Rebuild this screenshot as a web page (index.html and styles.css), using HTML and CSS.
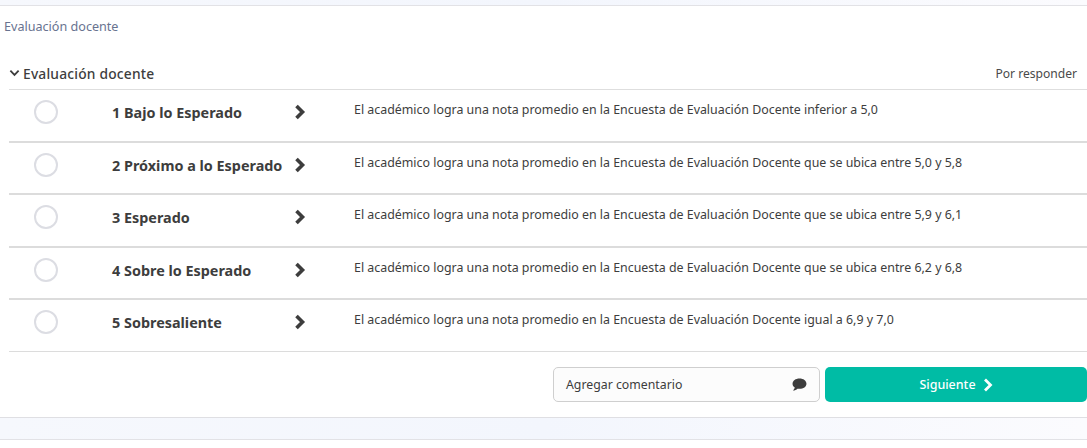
FILE: index.html
```html
<!DOCTYPE html>
<html lang="es">
<head>
<meta charset="utf-8">
<title>Evaluación docente</title>
<link rel="stylesheet" href="styles.css">
</head>
<body>
<div class="band band-top"></div>
<main class="card">
  <div class="crumb">Evaluación docente</div>
  <section class="group">
    <header class="group-head">
      <span class="group-title">
        <svg class="caret" viewBox="0 0 12 8" width="11" height="8"><path d="M1.500 1.500 6 6l4.500-4.500" fill="none" stroke="#3d3d3d" stroke-width="2"/></svg>
        Evaluación docente
      </span>
      <span class="status">Por responder</span>
    </header>
    <div class="row">
      <span class="radio"></span><span class="level">1 Bajo lo Esperado</span>
      <svg class="chev" viewBox="0 0 12 16" width="12" height="16"><path d="M2.500 2 8.500 8 2.500 14" fill="none" stroke="#3d3d3d" stroke-width="3.600"/></svg>
      <span class="desc">El académico logra una nota promedio en la Encuesta de Evaluación Docente inferior a 5,0</span>
    </div>
    <div class="row">
      <span class="radio"></span><span class="level">2 Próximo a lo Esperado</span>
      <svg class="chev" viewBox="0 0 12 16" width="12" height="16"><path d="M2.500 2 8.500 8 2.500 14" fill="none" stroke="#3d3d3d" stroke-width="3.600"/></svg>
      <span class="desc">El académico logra una nota promedio en la Encuesta de Evaluación Docente que se ubica entre 5,0 y 5,8</span>
    </div>
    <div class="row">
      <span class="radio"></span><span class="level">3 Esperado</span>
      <svg class="chev" viewBox="0 0 12 16" width="12" height="16"><path d="M2.500 2 8.500 8 2.500 14" fill="none" stroke="#3d3d3d" stroke-width="3.600"/></svg>
      <span class="desc">El académico logra una nota promedio en la Encuesta de Evaluación Docente que se ubica entre 5,9 y 6,1</span>
    </div>
    <div class="row">
      <span class="radio"></span><span class="level">4 Sobre lo Esperado</span>
      <svg class="chev" viewBox="0 0 12 16" width="12" height="16"><path d="M2.500 2 8.500 8 2.500 14" fill="none" stroke="#3d3d3d" stroke-width="3.600"/></svg>
      <span class="desc">El académico logra una nota promedio en la Encuesta de Evaluación Docente que se ubica entre 6,2 y 6,8</span>
    </div>
    <div class="row row-last">
      <span class="radio"></span><span class="level">5 Sobresaliente</span>
      <svg class="chev" viewBox="0 0 12 16" width="12" height="16"><path d="M2.500 2 8.500 8 2.500 14" fill="none" stroke="#3d3d3d" stroke-width="3.600"/></svg>
      <span class="desc">El académico logra una nota promedio en la Encuesta de Evaluación Docente igual a 6,9 y 7,0</span>
    </div>
  </section>
  <footer class="actions">
    <button class="comment"><span>Agregar comentario</span>
      <svg viewBox="0 0 16 14" width="15" height="13"><path d="M8 .5c4.200 0 7.500 2.400 7.500 5.600S12.200 11.700 8 11.700c-.8 0-1.500-.1-2.200-.2C4.700 12.600 3 13.400 1 13.500c1-.8 1.700-2 1.900-3.200C1.400 9.300.5 7.800.5 6.100.5 2.900 3.800.5 8 .5z" fill="#3d3d3d"/></svg>
    </button>
    <button class="next">Siguiente
      <svg viewBox="0 0 10 14" width="10" height="14"><path d="M2 1.500 7.500 7 2 12.500" fill="none" stroke="#fff" stroke-width="2.800"/></svg>
    </button>
  </footer>
</main>
<div class="band band-bottom"></div>
</body>
</html>
```
FILE: styles.css
```css
* { box-sizing: border-box; }
html, body { margin: 0; padding: 0; background: #fff; }
body { font-family: "Noto Sans", sans-serif; color: #3d3d3d; overflow: hidden; }
.band { background: linear-gradient(90deg, #f6f8fd, #f3f6fd 50%, #fbfbfe); }
.band-top { height: 6px; border-bottom: 1px solid #e2e2e6; }
.band-bottom { height: 21px; border-bottom: 1px solid #e2e2e6; box-sizing: content-box; }
.card { height: 412px; padding-top: 12px; border-bottom: 1px solid #dfdfe3; display: flex; flex-direction: column; }
.crumb { font-size: 12.600px; line-height: 17px; color: #687390; padding-left: 4px; }
.group { margin: 28px 0 0 9px; }
.group-head { height: 27px; display: flex; justify-content: space-between; align-items: center; border-bottom: 1px solid #dedede; padding: 0 10px 6px 0; }
.group-title { font-size: 13.800px; font-weight: 500; letter-spacing: .2px; display: flex; align-items: center; gap: 3px; }
.status { font-size: 12.100px; color: #4a4a4a; }
.row { height: 52.500px; display: flex; align-items: flex-start; border-bottom: 2px solid #dcdcdc; }
.row-last { height: 52px; border-bottom-width: 1px; }
.radio { width: 24px; height: 24px; border-radius: 50%; border: 2px solid #dcdde3; margin: 10px 0 0 25px; flex: none; }
.level { width: 182px; margin: 14px 0 0 54px; font-size: 14.400px; line-height: 18px; font-weight: 700; flex: none; white-space: nowrap; }
.chev { margin-top: 14px; flex: none; }
.desc { margin: 11px 0 0 48px; font-size: 12.400px; line-height: 18px; white-space: nowrap; }
.actions { display: flex; justify-content: flex-end; gap: 5px; margin-top: 15px; }
button { font-family: inherit; height: 35px; border-radius: 5px; display: flex; align-items: center; cursor: pointer; }
.comment { width: 267px; background: #fcfcfc; border: 1px solid #cfcfcf; color: #3d3d3d; font-size: 12.300px; justify-content: space-between; padding: 0 12px; }
.next { width: 262px; background: #00bca5; border: 0; color: #fff; font-size: 12.500px; font-weight: 500; justify-content: center; gap: 7px; }
```
